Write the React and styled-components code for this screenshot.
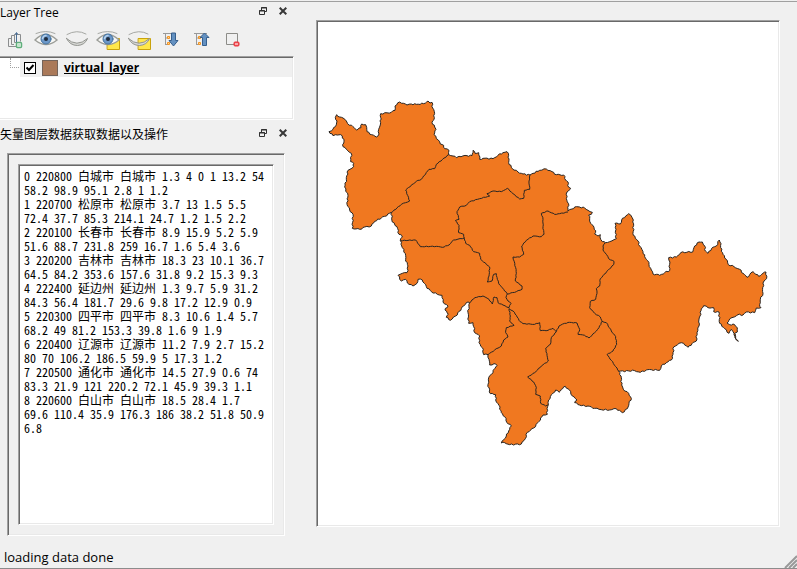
import React from "react";
import styled, { createGlobalStyle } from "styled-components";

const GlobalStyle = createGlobalStyle`
  *, *::before, *::after { box-sizing: border-box; }
  body {
    margin: 0;
    background: #f0f0f0;
    color: #000;
    font: 12px/16px "Open Sans", "Noto Sans CJK SC", sans-serif;
  }
  button, input, textarea { margin: 0; padding: 0; font: inherit; color: inherit; }
  svg { display: block; }
`;

const Window = styled.div`
  display: flex;
  flex-direction: column;
  min-height: 100vh;
  padding-top: 1px;
`;

const Frame = styled.div`
  flex: 1;
  display: flex;
  flex-direction: column;
  border-top: 1px solid #a0a0a0;
  border-bottom: 1px solid #8c8c8c;
`;

const Workspace = styled.div`
  flex: 1;
  display: grid;
  grid-template-columns: 294px minmax(0, 1fr);
  gap: 22px;
`;

const Docks = styled.div`
  display: flex;
  flex-direction: column;
`;

const Dock = styled.section`
  display: flex;
  flex-direction: column;
  flex: ${(p) => (p.$grow ? 1 : "none")};
`;

const DockHeader = styled.header`
  display: flex;
  align-items: center;
  gap: 8px;
  height: 22px;
  padding-right: 5px;
`;

const DockTitle = styled.h2`
  flex: 1;
  margin: 0;
  font: inherit;
  font-size: 12px;
`;

const HeaderButton = styled.button`
  display: grid;
  place-items: center;
  width: 12px;
  height: 16px;
  margin-bottom: 4px;
  border: 0;
  background: none;
`;

const Toolbar = styled.div`
  display: flex;
  height: 32px;
`;

const ToolButton = styled.button`
  display: grid;
  place-items: center;
  width: 31px;
  height: 32px;
  border: 0;
  background: none;
`;

const sunken = `
  border: 1px solid;
  border-color: #a0a0a0 #fff #fff #a0a0a0;
  box-shadow: inset 1px 1px #696969, inset -1px -1px #e9e9e9;
`;

const LayerTree = styled.ul`
  ${sunken}
  border-left: 0;
  box-shadow: inset 0 1px #696969, inset -1px -1px #e9e9e9;
  height: 64px;
  margin: 0 0 4px;
  padding: 1px 1px 1px 0;
  list-style: none;
  background: #fff;
`;

const LayerRow = styled.li`
  display: flex;
  height: 19px;
`;

const Branch = styled.span`
  width: 9px;
  height: 10px;
  margin: 0 1px 0 10px;
  border-left: 1px dotted #a0a0a0;
  border-bottom: 1px dotted #a0a0a0;
`;

const LayerLabel = styled.label`
  flex: 1;
  display: flex;
  align-items: center;
  gap: 6px;
  padding-left: 4px;
  background: #f0f0f0;
  font-weight: 700;
  text-decoration: underline;
`;

const Check = styled.span`
  position: relative;
  width: 12px;
  height: 12px;
  input {
    display: block;
    appearance: none;
    width: 12px;
    height: 12px;
    border: 1px solid #000;
    background: #fff;
  }
  svg {
    position: absolute;
    inset: 0;
    pointer-events: none;
    visibility: hidden;
  }
  input:checked + svg { visibility: visible; }
`;

const Swatch = styled.span`
  width: 16px;
  height: 16px;
  border: 1px solid #73635a;
  background: #aa7959;
`;

const DataGroup = styled.div`
  ${sunken}
  flex: 1;
  display: flex;
  margin: 7px 9px 11px 7px;
  padding: 10px;
`;

const DataText = styled.textarea`
  ${sunken}
  flex: 1;
  min-width: 0;
  padding: 4px 5px;
  border-radius: 0;
  outline: 0;
  resize: none;
  overflow: hidden;
  background: #fff;
  font: 12px/14px "Noto Sans Mono CJK SC", "Liberation Mono", "Noto Sans CJK SC", monospace;
`;

const MapCanvas = styled.main`
  ${sunken}
  display: flex;
  min-width: 0;
  margin: 18px 17px 20px 0;
  padding: 1px;
  background: #fff;
  svg { width: 100%; height: auto; }
`;

const StatusBar = styled.footer`
  display: flex;
  justify-content: space-between;
  align-items: flex-end;
  height: 21px;
  padding-left: 4px;
  font-size: 13px;
  line-height: 22px;
`;

const records = `0 220800 白城市 白城市 1.3 4 0 1 13.2 54 58.2 98.9 95.1 2.8 1 1.2
1 220700 松原市 松原市 3.7 13 1.5 5.5 72.4 37.7 85.3 214.1 24.7 1.2 1.5 2.2
2 220100 长春市 长春市 8.9 15.9 5.2 5.9 51.6 88.7 231.8 259 16.7 1.6 5.4 3.6
3 220200 吉林市 吉林市 18.3 23 10.1 36.7 64.5 84.2 353.6 157.6 31.8 9.2 15.3 9.3
4 222400 延边州 延边州 1.3 9.7 5.9 31.2 84.3 56.4 181.7 29.6 9.8 17.2 12.9 0.9
5 220300 四平市 四平市 8.3 10.6 1.4 5.7 68.2 49 81.2 153.3 39.8 1.6 9 1.9
6 220400 辽源市 辽源市 11.2 7.9 2.7 15.2 80 70 106.2 186.5 59.9 5 17.3 1.2
7 220500 通化市 通化市 14.5 27.9 0.6 74 83.3 21.9 121 220.2 72.1 45.9 39.3 1.1
8 220600 白山市 白山市 18.5 28.4 1.7 69.6 110.4 35.9 176.3 186 38.2 51.8 50.9 6.8`;

/* Map geometry: each run of points is relative to the origin of its map sheet. */
const sheet = (dx, dy) => (text) =>
  text.trim().split(/\s+/).map((pair) => {
    const [x, y] = pair.split(",").map(Number);
    return [x + dx, y + dy];
  });
const nw = sheet(960, 270);
const mid = sheet(1170, 420);
const south = sheet(1380, 840);
const east = sheet(1740, 600);

const outline = [
  ...nw("28,127 40,120 47,112 52,95 47,84 51,76 60,83 70,86 80,95 84,103 100,112 111,122 118,116 124,115 126,104 138,106 141,114 142,127 156,136 170,143 178,134 177,120 183,100 183,73 215,69 226,63 226,50 240,38 252,42 262,47 275,44 290,45 312,43 325,35 331,41 337,39 339,56 344,67 344,85 337,100 345,113 349,120 343,136 356,152 362,164 372,168 375,178 388,183 387,196"),
  ...mid("190,50 200,55 208,51 232,49 247,49 250,33 256,42 267,40 270,60 280,57 310,58 325,48 340,40 352,37 357,48 357,70 368,88 385,98 400,104 421,107 430,102 450,93 470,89 487,97 500,106 522,107 528,122 535,128 534,138 543,147 532,158 530,178 536,192 535,215 547,209 555,203"),
  ...east("0,23 15,26 25,33 38,39 35,45 27,47 30,58 33,72 43,84 48,94 45,104 55,110 62,106 63,120 68,127 77,130 90,127 103,121 110,118 107,100 109,90 106,72 122,74 126,62 138,50 147,43 157,54 161,62 161,108 175,125 180,140 190,157 195,172 204,184 208,196 215,212 220,224 230,225 240,228 255,220 270,214 270,195 267,175 290,173 303,160 340,157 345,140 358,128 368,128 375,140 377,155 385,162 396,147 410,140 419,122 424,133 423,145 430,165 440,180 446,196 463,202 480,210 490,222 502,234 510,226 520,217 537,231 550,222 559,218 561,237 553,245 549,265 550,282 542,300 540,315 544,325 530,326 525,340 500,338 490,347 475,346 460,354 448,362 442,371 450,376 465,376 473,385 473,398 465,402 468,418 476,426 470,422 463,402 455,390 448,402 435,388 420,372 418,338 402,337 402,325 385,325 372,319 365,328 361,350 357,368 358,380 352,400 350,425 337,433 325,444 312,432 298,432 282,443 280,465 275,482 260,490 245,500 240,513 215,511 200,512 182,519 165,514 117,516"),
  ...south("484,290 486,317 495,335 507,342 515,357 508,372 503,388 488,400 470,388 450,392 425,391 405,387 385,380 365,379 345,370 352,362 338,350 333,337 317,321 305,330 298,339 288,332 272,352 267,362 266,376 262,388 263,405 250,407 238,426 222,446 203,459 197,478 185,494 150,496 135,490 125,491 140,470 147,455 155,440 142,430 135,412 125,400 118,378 108,362 108,346 92,343 85,315 87,295 95,285 105,268 112,258 103,253 90,257 88,240 85,226 72,226 68,205 58,190 60,170 45,160 42,142 40,130 27,132 25,100 30,70"),
  ...mid("230,490 215,508 198,530 182,543 170,534 176,525 166,512 175,500 160,488 157,468 143,465 125,457 110,442 98,422 85,420 82,432 70,440 58,435 48,420 35,425 25,408 38,402 52,400 55,380 48,360 47,343 38,325 32,304 38,290 28,285 22,262 8,248 5,219"),
  ...nw("195,381 165,396 155,410 135,413 120,420 98,417 100,375 90,362 82,345 85,318 75,293 80,270 85,243 102,232 102,222 93,217 95,192 80,180 70,172 73,150 63,136 48,136 40,139 28,127"),
];

const borders = [
  nw("387,196 350,225 345,238 328,240 305,270 290,276 258,302 270,335 245,345 215,370"),
  mid("421,107 418,125 420,150 404,153 402,177 390,179 370,163 353,147 335,157 310,155 292,163 300,170 270,178 240,187 230,198 210,203 202,217 208,240 197,244 208,258 207,280 222,285 224,297"),
  mid("32,304 78,302 92,322 140,321 158,324 178,317 192,302 224,296"),
  mid("224,297 228,312 240,318 252,337 270,342 273,360 300,383 298,410 293,428 307,425 312,405 320,403 323,420 330,437 342,450 353,464"),
  mid("535,218 510,223 495,225 475,215 455,222 460,240 460,262 463,285 455,292 430,290 410,303 396,320 402,345 390,353 370,353 378,385 380,402 377,425 397,440 397,450 380,457 353,464 349,475 355,485 364,492 358,505"),
  mid("240,490 255,475 280,470 298,480 308,494 313,473 322,475 325,490 340,497 358,505"),
  south("148,88 152,110 150,125 163,138 140,145 138,160 145,173 132,182 125,200 105,212 85,226"),
  south("148,88 160,95 170,108 178,123 190,133 225,135 240,130 242,154 265,153 280,147 290,157 298,140 315,132 330,129 352,131 360,150 355,165 375,168 388,176 405,160 418,145 427,126"),
  south("290,157 275,175 272,195 258,207 262,228 266,245 245,260 225,280 204,293 222,308 230,325 228,345 242,350 243,372 258,380 266,376"),
  east("77,130 70,140 70,152 80,165 87,178 103,186 102,196 85,213 62,238 60,260 50,268 52,282 48,300 32,306 30,325 45,342 62,353 68,367"),
  south("427,126 440,130 455,155 468,172 471,195 460,215 442,226 455,243 468,262 478,276"),
];

/* Breaks straight runs into short steps so boundaries look surveyed. */
const rough = (points, amount) => {
  let n = 0;
  return points
    .map(([x, y], i) => {
      if (i === 0) return `M${x} ${y}`;
      const [px, py] = points[i - 1];
      const len = Math.hypot(x - px, y - py) || 1;
      const steps = Math.max(1, Math.round(len / 6));
      let d = "";
      for (let s = 1; s < steps; s++) {
        n += 1;
        const off = Math.sin(n * 2.3) * amount;
        const t = s / steps;
        const cx = px + (x - px) * t - ((y - py) / len) * off;
        const cy = py + (y - py) * t + ((x - px) / len) * off;
        d += `L${cx.toFixed(1)} ${cy.toFixed(1)}`;
      }
      return `${d}L${x} ${y}`;
    })
    .join("");
};

function ProvinceMap() {
  return (
    <svg viewBox="955 68 1380 1509" preserveAspectRatio="xMidYMid meet" role="img" aria-label="virtual_layer">
      <g stroke="#292522" strokeWidth="3" strokeLinejoin="round">
        <path d={`${rough(outline, 2)}Z`} fill="#f07820" />
        {borders.map((line, i) => (
          <path key={i} d={rough(line, 1)} fill="none" />
        ))}
      </g>
    </svg>
  );
}

function FloatIcon() {
  return (
    <svg width="8" height="8" viewBox="0 0 8 8" fill="none" stroke="#303030">
      <path d="M2.5 3V.5h5v4H6M2 1h6" />
      <path d="M.5 3.5h5v4h-5zM0 4h6" />
    </svg>
  );
}

function CloseIcon() {
  return (
    <svg width="8" height="8" viewBox="0 0 8 8" stroke="#383838" strokeWidth="2">
      <path d="M.7.7l6.6 6.6M7.3.7L.7 7.3" />
    </svg>
  );
}

function Header({ children }) {
  return (
    <DockHeader>
      <DockTitle>{children}</DockTitle>
      <HeaderButton type="button" aria-label="Float"><FloatIcon /></HeaderButton>
      <HeaderButton type="button" aria-label="Close"><CloseIcon /></HeaderButton>
    </DockHeader>
  );
}

function AddGroupIcon() {
  return (
    <svg width="16" height="18" viewBox="0 0 16 18" fill="none" stroke="#8b8d8e">
      <path d="M3 7.5H.5v8H9M6 13.5H3.500v-9H6M9 11.500H6.500v-8h6v7" />
      <path d="M8.500 12V2M7 3.500L8.500 1.500 10 3.500" stroke="#4c7096" />
      <rect x="8.500" y="11.500" width="5" height="5" rx="1" fill="#f3fbf3" stroke="#5fae7b" strokeWidth="1.500" />
      <path d="M11 12.500v3M9.500 14h3" stroke="#b4dcbf" />
    </svg>
  );
}

function EyeIcon({ open, filter }) {
  return (
    <svg width="25" height="20" viewBox="0 0 25 20" fill="none" strokeLinecap="round">
      {filter && <path d="M11.500 8.500h12v11h-12z" fill="#ffe74a" stroke="#c9a20c" />}
      {open ? (
        <>
          <path d="M1 10Q11.500 -1 23 10Q12 19 1 10Z" fill="#f7f7f5" stroke="#9b9d98" strokeWidth="1.400" />
          <circle cx="12" cy="9" r="5" fill="#6c98c9" stroke="#41719f" />
          <path d="M8.500 8.500Q9.500 5.500 12 5.500" stroke="#b7d2ec" strokeWidth="1.500" />
          <circle cx="12" cy="9" r="2" fill="#1f2c3d" />
          <path d="M2 3.500Q12 -.5 21 3.500" stroke="#a6a8a4" />
        </>
      ) : (
        <>
          <path d="M2 4.500Q12 -1 21 4" stroke="#a6a8a4" />
          <path d="M1.500 8.500Q12 18 22.500 8.500Q20 15 12.500 15.500Q5 15.500 1.500 8.500Z" fill="#d8d9d6" stroke="#92948f" />
        </>
      )}
    </svg>
  );
}

function TreeArrowIcon({ up }) {
  return (
    <svg width="16" height="16" viewBox="0 0 16 16" fill="none">
      <path d="M0 1.500h13M2.500 2v11M3 6h3M3 12.500h3" stroke="#999" />
      <path d="M4.500 4.500h2v2h-2zM4.500 10.500h2v2h-2z" fill="#ffd392" stroke="#f59420" />
      <path
        d={up ? "M10.500 1L15 5.500H12.500V13.500H8.500V5.500H6Z" : "M8.500 1H12.500V8.500H15L10.500 14L6 8.500H8.500Z"}
        fill="#6491c1"
        stroke="#365f8d"
      />
    </svg>
  );
}

function RemoveIcon() {
  return (
    <svg width="16" height="16" viewBox="0 0 16 16" fill="none">
      <path d="M1.500 1.500h11v11h-11z" stroke="#8c8c88" />
      <rect x="9" y="10" width="5" height="4" rx="1" fill="#f25056" stroke="#e8343c" />
      <path d="M10 12h3" stroke="#fff" />
    </svg>
  );
}

const tools = [
  ["Add group", <AddGroupIcon />],
  ["Show all layers", <EyeIcon open />],
  ["Hide all layers", <EyeIcon />],
  ["Show selected layers", <EyeIcon open filter />],
  ["Hide selected layers", <EyeIcon filter />],
  ["Expand all", <TreeArrowIcon />],
  ["Collapse all", <TreeArrowIcon up />],
  ["Remove layer", <RemoveIcon />],
];

export default function App() {
  return (
    <Window>
      <GlobalStyle />
      <Frame>
        <Workspace>
          <Docks>
            <Dock>
              <Header>Layer Tree</Header>
              <Toolbar role="toolbar">
                {tools.map(([name, icon]) => (
                  <ToolButton key={name} type="button" aria-label={name}>{icon}</ToolButton>
                ))}
              </Toolbar>
              <LayerTree>
                <LayerRow>
                  <Branch />
                  <LayerLabel>
                    <Check>
                      <input type="checkbox" defaultChecked />
                      <svg width="12" height="12" viewBox="0 0 12 12" fill="none" stroke="#000" strokeWidth="2">
                        <path d="M2.500 5.500L5 8L9.500 3" />
                      </svg>
                    </Check>
                    <Swatch />
                    virtual_layer
                  </LayerLabel>
                </LayerRow>
              </LayerTree>
            </Dock>
            <Dock $grow>
              <Header>矢量图层数据获取数据以及操作</Header>
              <DataGroup>
                <DataText aria-label="矢量图层数据获取数据以及操作" spellCheck={false} defaultValue={records} />
              </DataGroup>
            </Dock>
          </Docks>
          <MapCanvas>
            <ProvinceMap />
          </MapCanvas>
        </Workspace>
        <StatusBar role="status">
          <span>loading data done</span>
          <svg width="13" height="13" viewBox="0 0 13 13" stroke="#999" strokeWidth="2">
            <path d="M1 13L13 1M5 13L13 5M9 13L13 9" />
          </svg>
        </StatusBar>
      </Frame>
    </Window>
  );
}
